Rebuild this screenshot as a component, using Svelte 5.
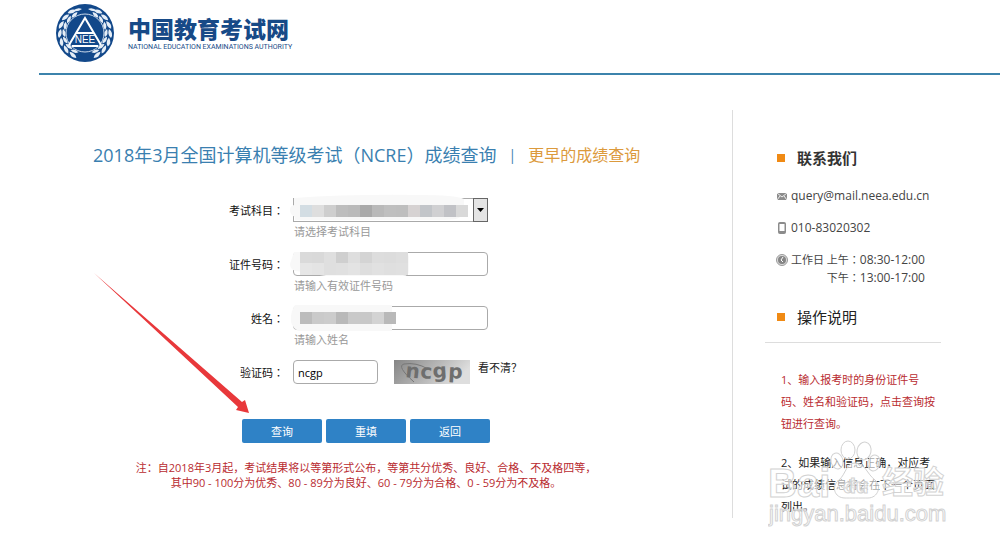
<script lang="ts">
	type Mask = {
		blob: string;
		cells: { x: number; y: number; fill: string }[];
	};

	const row = (y: number, colors: string[]) => colors.map((fill, i) => ({ x: 10 + i * 12, y, fill }));

	const masks: Record<string, Mask> = {
		subject: {
			blob: 'M4 0Q60-4 130-3Q165-3 174 1V8Q177 18 170 19Q168 22 150 22H5V19Q0 17 0 12Q0 8 4 7Z',
			cells: row(7, [
				'#d3dde3', '#dedede', '#cecece', '#bdbdbd', '#bababa', '#a9a9a9', '#b9b9b9',
				'#bfbfbf', '#bebebe', '#d6d2d2', '#c2c5c9', '#d0d0d2', '#c1c2c6', '#d9d9d9'
			])
		},
		idNumber: {
			blob: 'M4 0H113Q119 0 119 6V18Q119 24 113 24H36Q28 23 20 21L5 19Q0 17 0 12Z',
			cells: [
				...row(0, ['#dadada', '#d9d9d9', '#dfdfdf', '#cfcfcf', '#dedede', '#d4d4d4', '#dddddd', '#dcdcdc', '#dedede']),
				...row(11, ['#e6e6e6', '#e4e4e4', '#dfdfdf', '#e0e0e0', '#e3e3e3', '#dedede', '#e1e1e1', '#dfdfdf', '#e0e0e0'])
			]
		},
		name: {
			blob: 'M5-1H102V25H8Q0 20 1 12Q1 5 5-1Z',
			cells: row(6, ['#bcbcbc', '#cacaca', '#cccccc', '#b9b9b9', '#c9c9c9', '#c8c8c8', '#d3d3d3', '#b9b9b9'])
		}
	};

	const leaves = [30, 50, 70, 90, 110, 130, 150];

	let captcha = $state('ncgp');
	let idNumber = $state('');
	let fullName = $state('');

	function reset() {
		captcha = '';
		idNumber = '';
		fullName = '';
	}
</script>

{#snippet mask({ blob, cells }: Mask)}
	<svg class="mask" width="180" height="28" viewBox="0 0 180 28" aria-hidden="true">
		<path d={blob} fill="#f8f8f8" />
		{#each cells as cell}
			<rect x={cell.x} y={cell.y} width="12" height="12" fill={cell.fill} />
		{/each}
	</svg>
{/snippet}

<header>
	<svg class="emblem" width="58" height="58" viewBox="-29 -29 58 58" aria-hidden="true">
		<circle r="29" fill="#12488a" />
		{#each [1, -1] as side}
			<g transform="scale({side} 1)">
				{#each leaves as angle}
					<g transform="rotate({angle})">
						<path d="M-4-24Q0-29 5-26Q2-22-4-24Z" fill="#e6eef7" />
						<path d="M-4-22Q1-24 4-20Q-1-18-4-22Z" fill="#e6eef7" />
					</g>
				{/each}
				<path d="M3-24Q8-26 12-22Q7-21 3-24Z" fill="#e6eef7" />
			</g>
		{/each}
		<circle r="19" fill="#12488a" stroke="#c9d8ea" stroke-width="1" />
		<path d="M-16 12L0-15L16 12M-9 0H9M-13 13H13" fill="none" stroke="#fff" stroke-width="2" />
		<text y="10" text-anchor="middle">NEE</text>
	</svg>
	<div class="brand">
		<strong>中国教育考试网</strong>
		<span>NATIONAL EDUCATION EXAMINATIONS AUTHORITY</span>
	</div>
</header>

<div class="page">
	<main>
		<h1>
			2018年3月全国计算机等级考试（NCRE）成绩查询
			<i>|</i>
			<a href="#earlier">更早的成绩查询</a>
		</h1>

		<form onsubmit={(e) => e.preventDefault()}>
			<div class="row">
				<label for="subject">考试科目：</label>
				<div class="field">
					<select id="subject"><option></option></select>
					<svg class="arrow-box" width="15" height="24" viewBox="0 0 15 24" aria-hidden="true">
						<rect x="0.5" y="0.5" width="14" height="23" fill="#e4e4e4" stroke="#666" />
						<path d="M4 10H11L7.5 14Z" fill="#000" />
					</svg>
					{@render mask(masks.subject)}
					<small>请选择考试科目</small>
				</div>
			</div>
			<div class="row">
				<label for="id-number">证件号码：</label>
				<div class="field">
					<input id="id-number" type="text" bind:value={idNumber} />
					{@render mask(masks.idNumber)}
					<small>请输入有效证件号码</small>
				</div>
			</div>
			<div class="row">
				<label for="name">姓名：</label>
				<div class="field">
					<input id="name" type="text" bind:value={fullName} />
					{@render mask(masks.name)}
					<small>请输入姓名</small>
				</div>
			</div>
			<div class="row">
				<label for="captcha">验证码：</label>
				<div class="field captcha">
					<input id="captcha" type="text" bind:value={captcha} />
					<svg width="76" height="24" viewBox="0 0 76 24" aria-hidden="true">
						<defs>
							<linearGradient id="shade" x2="1" y2="0.3">
								<stop offset="0" stop-color="#858585" />
								<stop offset="0.55" stop-color="#b4b4b4" />
								<stop offset="1" stop-color="#dedede" />
							</linearGradient>
						</defs>
						<rect width="76" height="24" fill="url(#shade)" />
						<path d="M20 22Q2 6 10 4Q22 2 34 9" fill="none" stroke="#777" />
						<text x="11 26 39 54" y="17 18 18 18" rotate="6 4 -4 3">ncgp</text>
					</svg>
					<a href="#refresh">看不清？</a>
				</div>
			</div>
			<div class="buttons">
				<button type="submit">查询</button>
				<button type="button" onclick={reset}>重填</button>
				<button type="button">返回</button>
			</div>
		</form>

		<p class="note">
			注：自2018年3月起，考试结果将以等第形式公布，等第共分优秀、良好、合格、不及格四等，<br />
			其中90 - 100分为优秀、80 - 89分为良好、60 - 79分为合格、0 - 59分为不及格。
		</p>

		<svg class="pointer" width="160" height="144" viewBox="0 0 160 144" aria-hidden="true">
			<path d="M0 0L148 129L151 127L155 140L142 137L144 134Z" fill="#e8383b" />
		</svg>
	</main>

	<aside>
		<h2>联系我们</h2>
		<ul>
			<li>
				<svg width="12" height="12" viewBox="0 0 12 12" aria-hidden="true">
					<rect x="1" y="3" width="10" height="7" fill="#8c8c8c" />
					<path d="M1 3L6 7L11 3M1 10L4 6M11 10L8 6" fill="none" stroke="#eee" />
				</svg>
				<a href="mailto:query@mail.neea.edu.cn">query@mail.neea.edu.cn</a>
			</li>
			<li>
				<svg width="12" height="12" viewBox="0 0 12 12" aria-hidden="true">
					<rect x="2.5" y="0.5" width="7" height="11" rx="1" fill="#8c8c8c" stroke="#8c8c8c" />
					<rect x="3.5" y="2" width="5" height="7" fill="#fff" />
				</svg>
				<span>010-83020302</span>
			</li>
			<li class="hours">
				<svg width="12" height="12" viewBox="0 0 12 12" aria-hidden="true">
					<circle cx="6" cy="6" r="5.5" fill="#ddd" stroke="#999" />
					<circle cx="6" cy="6" r="4" fill="#858585" />
					<path d="M7 3L5 6L7 8" fill="none" stroke="#fff" />
				</svg>
				<div>
					工作日 上午：<b>08:30-12:00</b><br />
					下午：<b>13:00-17:00</b>
				</div>
			</li>
		</ul>

		<h2 class="guide">操作说明</h2>
		<div class="steps">
			<p class="red">1、输入报考时的身份证件号码、姓名和验证码，点击查询按钮进行查询。</p>
			<p>2、如果输入信息正确，对应考试的成绩信息将会在下一个页面列出。</p>
		</div>

		<svg class="watermark" width="186" height="96" viewBox="0 0 186 96" aria-hidden="true">
			<g fill="#fff" fill-opacity="0.6" stroke="#d2d2d2">
				<ellipse cx="80" cy="17" rx="7" ry="9" />
				<ellipse cx="96" cy="18" rx="7" ry="9" transform="rotate(12 96 18)" />
				<ellipse cx="69" cy="28" rx="6" ry="8" transform="rotate(-15 69 28)" />
				<ellipse cx="106" cy="30" rx="6" ry="8" transform="rotate(15 106 30)" />
				<path d="M87 30C97 30 99 41 107 47C114 53 110 65 100 65C93 65 81 65 77 65C66 65 63 53 71 47C78 41 78 30 87 30Z" />
				<text class="bai" x="0" y="64">Bai</text>
				<text class="du" x="75" y="60">du</text>
				<text class="jingyan" x="114" y="60">经验</text>
				<text class="site" x="1" y="88">jingyan.baidu.com</text>
			</g>
		</svg>
	</aside>
</div>

<style>
	:global(body) {
		margin: 0;
		background: #fff;
		font-family: 'Open Sans', 'Noto Sans CJK SC', sans-serif;
		font-size: 11px;
		color: #333;
	}

	header {
		display: flex;
		align-items: flex-start;
		gap: 14px;
		margin-left: 39px;
		padding: 4px 0 11px 17px;
		border-bottom: 2px solid #3c83ac;
	}

	.emblem {
		display: block;

		text {
			font: 10px 'Liberation Sans', sans-serif;
			fill: #fff;
		}
	}

	.brand {
		display: flex;
		flex-direction: column;
		padding-top: 11px;
		color: #174a87;
		white-space: nowrap;

		strong {
			font-size: 23px;
			font-weight: 900;
			line-height: 28px;
		}

		span {
			font: 7px/8px Roboto, 'Liberation Sans', sans-serif;
		}
	}

	.page {
		display: flex;
		align-items: flex-start;
		margin-top: 35px;
		padding-bottom: 32px;
	}

	main {
		position: relative;
		flex: 1;
		min-width: 0;
	}

	h1 {
		display: flex;
		align-items: center;
		gap: 12px;
		margin: 33px 0 31px 93px;
		font-size: 18px;
		font-weight: 400;
		line-height: 24px;
		white-space: nowrap;
		color: #3a7fb0;

		i {
			font-size: 14px;
			font-style: normal;
		}

		a {
			font-size: 16px;
			color: #dc9a3c;
			text-decoration: none;
		}
	}

	.row {
		display: grid;
		grid-template-columns: 284px 195px;
		column-gap: 9px;
	}

	label {
		font-family: 'Noto Sans CJK TC', sans-serif;
		line-height: 24px;
		text-align: right;
		color: #111;
	}

	.field {
		position: relative;

		input,
		select {
			display: block;
			box-sizing: border-box;
			width: 100%;
			height: 24px;
			border: 1px solid #aaa;
			border-radius: 4px;
			padding: 0 4px;
			background: #fff;
			font: inherit;
			color: #000;
		}

		select {
			appearance: none;
			border-radius: 0;
		}

		small {
			display: block;
			padding-left: 1px;
			font-size: 11px;
			line-height: 20px;
			margin-bottom: 10px;
			color: #999;
		}
	}

	.mask {
		position: absolute;
		top: 0;
		left: -3px;
		overflow: visible;
		pointer-events: none;
	}

	.arrow-box {
		position: absolute;
		top: 0;
		right: 0;
		pointer-events: none;
	}

	.captcha {
		display: flex;
		white-space: nowrap;

		input {
			flex: none;
			width: 85px;
		}

		svg {
			flex: none;
			margin: 0 8px 0 16px;
		}

		text {
			font: bold 20px 'DejaVu Sans', sans-serif;
			fill: #6e6e6e;
		}

		a {
			line-height: 16px;
			color: #222;
			text-decoration: none;
		}
	}

	.buttons {
		display: flex;
		justify-content: center;
		gap: 4px;
		margin-top: 35px;

		button {
			width: 80px;
			height: 24px;
			border: none;
			border-radius: 2px;
			padding: 0;
			background: #2f82c6;
			font: inherit;
			color: #fff;
		}
	}

	.note {
		margin: 17px 0 0;
		line-height: 15px;
		text-align: center;
		white-space: nowrap;
		color: #b92b30;
	}

	.pointer {
		position: absolute;
		top: 163px;
		left: 94px;
		pointer-events: none;
	}

	aside {
		position: relative;
		box-sizing: border-box;
		width: 268px;
		border-left: 1px solid #ddd;
		padding: 36px 59px 0 32px;
	}

	h2 {
		display: flex;
		align-items: center;
		gap: 12px;
		margin: 0;
		padding-left: 12px;
		font-size: 15px;
		line-height: 24px;
		color: #333;

		&::before {
			content: '';
			width: 8px;
			height: 8px;
			background: #f08a14;
		}
	}

	.guide {
		border-bottom: 1px solid #ddd;
		padding-bottom: 13px;
		font-weight: 400;
		color: #222;
	}

	ul {
		display: flex;
		flex-direction: column;
		gap: 14px;
		margin: 0;
		padding: 17px 0 18px 11px;
		list-style: none;
	}

	li {
		display: flex;
		align-items: center;
		gap: 3px;
		font-family: 'Open Sans', 'Noto Sans CJK TC', sans-serif;
		font-size: 12px;
		line-height: 18px;
		white-space: nowrap;
		color: #444;

		a {
			color: inherit;
			text-decoration: none;
		}
	}

	.hours {
		align-items: flex-start;
		font-size: 11px;

		svg {
			margin-top: 3px;
		}

		div {
			text-align: right;
		}

		b {
			font-size: 12px;
			font-weight: 400;
		}
	}

	.steps {
		padding: 26px 3px 0 16px;
		line-height: 22px;
		color: #222;

		p {
			margin: 0 0 17px;
		}

		.red {
			color: #b92b30;
		}

		p:last-child {
			margin: 0;
		}
	}

	.watermark {
		position: absolute;
		top: 323px;
		left: 35px;
		pointer-events: none;

		.bai {
			font: bold 40px 'Liberation Sans', sans-serif;
		}

		.du {
			font: bold 21px 'Liberation Sans', sans-serif;
		}

		.jingyan {
			font: bold 31px 'Noto Sans CJK SC', sans-serif;
		}

		.site {
			font: 22px 'Liberation Sans', sans-serif;
		}
	}
</style>
